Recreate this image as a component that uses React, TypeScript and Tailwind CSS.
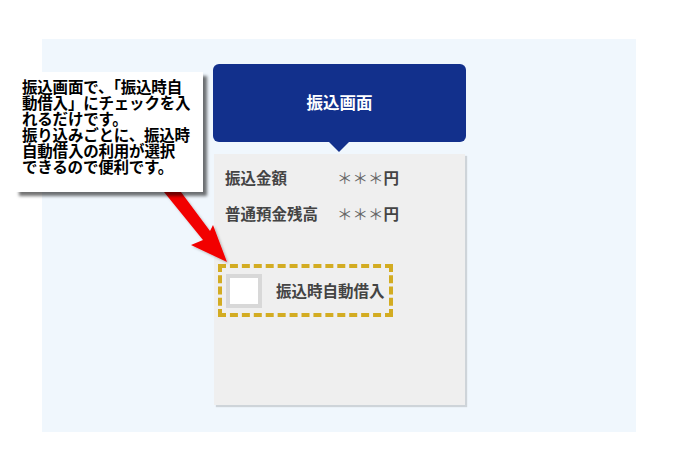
const jp = { fontFamily: '"Noto Sans CJK JP", "Noto Sans", sans-serif' };

function Arrow() {
  return (
    <svg
      className="absolute left-0 top-0 pointer-events-none"
      width="679"
      height="460"
      viewBox="0 0 679 460"
    >
      <defs>
        <filter id="sh" x="-20%" y="-20%" width="140%" height="140%">
          <feDropShadow dx="1.5" dy="1.5" stdDeviation="1" floodColor="#000" floodOpacity="0.25" />
        </filter>
      </defs>
      <polygon
        points="164,192 175,184 210,231 213,225 227,262 191,245 203,240"
        fill="#f20000"
        filter="url(#sh)"
      />
    </svg>
  );
}

function Callout() {
  return (
    <div
      className="absolute left-[15px] top-[72px] w-[188px] h-[120px] bg-white pl-[7px] pt-[6px] shadow-[4px_4px_3px_rgba(0,0,0,0.55)] text-black text-[15.5px] leading-[16px] font-bold tracking-[-0.2px]"
      style={jp}
    >
      振込画面で、「振込時自
      <br />
      動借入」にチェックを入
      <br />
      れるだけです。
      <br />
      振り込みごとに、振込時
      <br />
      自動借入の利用が選択
      <br />
      できるので便利です。
    </div>
  );
}

function Row({ label, value }: { label: string; value: string }) {
  return (
    <div className="flex items-center h-[36px]">
      <span className="w-[112px]">{label}</span>
      <span>
        <span className="font-normal text-[#666]">＊＊＊</span>
        {value}
      </span>
    </div>
  );
}

function TransferCard() {
  return (
    <div className="w-[253px] flex flex-col items-center" style={jp}>
      <div className="w-[253px] h-[78px] rounded-[6px] bg-[#12308c] flex items-center justify-center text-white text-[16.5px] font-bold pb-[2px]">
        振込画面
      </div>
      <div className="w-0 h-0 border-l-[10px] border-r-[10px] border-t-[10px] border-l-transparent border-r-transparent border-t-[#12308c] -ml-[2px]" />
      <div className="mt-[2px] w-[251px] h-[251px] bg-[#efefef] shadow-[2px_2px_1px_rgba(0,0,0,0.14)] self-start ml-[1px]">
        <div className="pl-[11px] pt-[6px] text-[15.5px] font-bold text-[#444]">
          <Row label="振込金額" value="円" />
          <Row label="普通預金残高" value="円" />
        </div>
        <div className="ml-[4px] mt-[32px] w-[175px] h-[53px] border-[4px] border-dashed border-[#d3ac22] flex items-center pl-[4px]">
          <div className="w-[36px] h-[34px] bg-white border-[4px] border-[#d8d8d8]" />
          <span className="ml-[14px] text-[15.5px] font-bold text-[#444]">振込時自動借入</span>
        </div>
      </div>
    </div>
  );
}

export default function App() {
  return (
    <div className="relative w-[679px] h-[460px] bg-white pt-[39px] pl-[42px] overflow-hidden">
      <div className="w-[594px] h-[393px] bg-[#f0f7fd] pl-[171px] pt-[25px]">
        <TransferCard />
      </div>
      <Arrow />
      <Callout />
    </div>
  );
}
